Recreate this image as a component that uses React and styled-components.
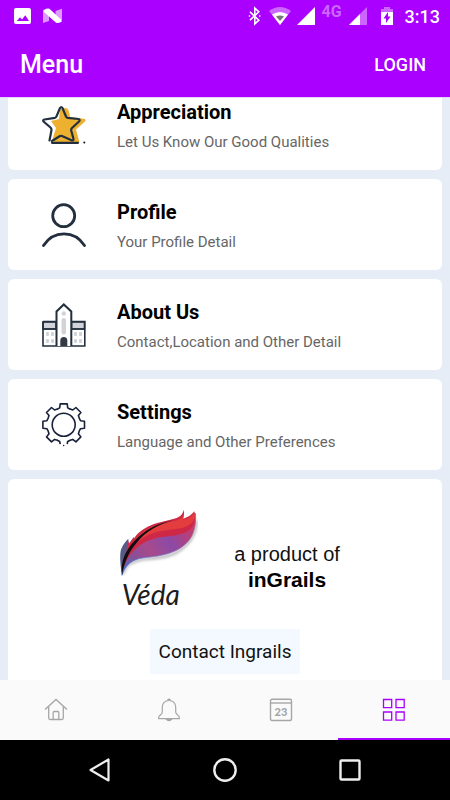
import React, { useLayoutEffect, useRef, useState } from "react";
import styled, { createGlobalStyle } from "styled-components";

const PURPLE = "#aa00ff";
const INK = "#232f3e";

const menuItems = [
  { title: "Appreciation", detail: "Let Us Know Our Good Qualities", Icon: StarIcon },
  { title: "Profile", detail: "Your Profile Detail", Icon: ProfileIcon },
  { title: "About Us", detail: "Contact,Location and Other Detail", Icon: SchoolIcon },
  { title: "Settings", detail: "Language and Other Preferences", Icon: GearIcon },
];

const tabs = [
  { name: "Home", Icon: HomeIcon },
  { name: "Notifications", Icon: BellIcon },
  { name: "Calendar", Icon: CalendarIcon },
  { name: "Menu", Icon: GridIcon },
];

function App() {
  const [active, setActive] = useState("Menu");
  const listRef = useRef(null);

  // the menu opens at its last entries
  useLayoutEffect(() => {
    listRef.current.scrollTop = listRef.current.scrollHeight;
  }, []);

  return (
    <Screen>
      <GlobalStyle />
      <StatusBar>
        <StatusGroup $gap={12}>
          <PictureIcon />
          <NougatIcon />
        </StatusGroup>
        <StatusGroup $gap={6}>
          <BluetoothIcon />
          <WifiIcon />
          <SignalIcon />
          <Network>4G</Network>
          <SignalIcon weak />
          <BatteryIcon />
          <Clock>3:13</Clock>
        </StatusGroup>
      </StatusBar>
      <Header>
        <HeaderTitle>Menu</HeaderTitle>
        <LoginButton type="button">LOGIN</LoginButton>
      </Header>
      <Content ref={listRef}>
        {menuItems.map(({ title, detail, Icon }) => (
          <MenuCard key={title} type="button">
            <Icon />
            <CardText>
              <CardTitle>{title}</CardTitle>
              <CardDetail>{detail}</CardDetail>
            </CardText>
          </MenuCard>
        ))}
        <ProductCard>
          <Brand>
            <VedaLogo />
            <BrandText>
              a product of
              <BrandName>inGrails</BrandName>
            </BrandText>
          </Brand>
          <ContactButton type="button">Contact Ingrails</ContactButton>
        </ProductCard>
      </Content>
      <TabBar>
        {tabs.map(({ name, Icon }) => (
          <Tab
            key={name}
            type="button"
            aria-label={name}
            $active={active === name}
            onClick={() => setActive(name)}
          >
            <Icon />
          </Tab>
        ))}
      </TabBar>
      <SystemBar>
        <SystemButton type="button" aria-label="Back">
          <svg width="24" height="26" viewBox="0 0 24 26" fill="none" stroke="#eee" strokeWidth="2.2" strokeLinejoin="round">
            <path d="M2.5 13 20.5 2.5v21z" />
          </svg>
        </SystemButton>
        <SystemButton type="button" aria-label="Home">
          <svg width="24" height="24" viewBox="0 0 24 24" fill="none" stroke="#eee" strokeWidth="2.4">
            <circle cx="12" cy="12" r="10.7" />
          </svg>
        </SystemButton>
        <SystemButton type="button" aria-label="Recent apps">
          <svg width="22" height="22" viewBox="0 0 22 22" fill="none" stroke="#eee" strokeWidth="2.4">
            <rect x="1.5" y="1.5" width="19" height="19" rx="1" />
          </svg>
        </SystemButton>
      </SystemBar>
    </Screen>
  );
}

/* status bar icons */

function PictureIcon() {
  return (
    <svg width="17" height="16" viewBox="0 0 17 16">
      <rect width="17" height="16" rx="2" fill="#fff" />
      <path d="M2.8 13 6 9.2l2 2.3 3.3-4.3 3.7 5.8z" fill={PURPLE} />
    </svg>
  );
}

function NougatIcon() {
  return (
    <svg width="19" height="16" viewBox="0 0 19 16">
      <path d="M0 1.5V15l6-2V5zM19 .8v13.5L12.500 11V3z" fill="#fff" opacity=".6" />
      <path d="M1 2Q4 0 6.500 .8L18 11.500v2.500q-2.500 1.500-5 .8L1 4z" fill="#fff" />
    </svg>
  );
}

function BluetoothIcon() {
  return (
    <svg width="16" height="20" viewBox="0 0 16 20" fill="none" stroke="#fff" strokeWidth="1.6">
      <path d="M3 5.8 11.800 14.200 7.800 18V2L11.800 5.800 3 14.200" />
      <path d="M1.800 10h1.400M12 10h1.400" />
    </svg>
  );
}

function WifiIcon() {
  return (
    <svg width="22" height="18" viewBox="0 0 22 18">
      <path d="M0 4Q11-4 22 4L11 18z" fill="#cc66ff" />
      <path d="M3 7.500q8-5 16 0L11 18z" fill="#fff" />
      <path d="M7 9.500q4-2 8 0L11 14z" fill="#777" />
    </svg>
  );
}

function SignalIcon({ weak }) {
  return (
    <svg width={weak ? 20 : 19} height="18" viewBox={weak ? "0 0 20 18" : "0 0 19 18"}>
      <path d="M0 18 18 0v18z" fill={weak ? "#cc66ff" : "#fff"} />
      {weak && <path d="M0 18 11 7v11z" fill="#fff" />}
    </svg>
  );
}

function BatteryIcon() {
  return (
    <svg width="24" height="18" viewBox="0 0 24 18">
      <path d="M6 2h3V0h6v2h3v4H6z" fill="#cc66ff" />
      <path d="M6 5h12v13H6z" fill="#fff" />
      <path d="M13 5v4.500h2.500L11 16v-4.500H8.500z" fill={PURPLE} />
    </svg>
  );
}

/* menu icons */

function StarIcon() {
  return (
    <CardIcon viewBox="0 0 44 44">
      <path
        d="M19 6 23 5q4-1 5 9l12 1.500q5 .5 3 3l-9 8 3.500 13H13l-3-3 2-11-6-9 9-2z"
        fill="#edb02f"
      />
      <path d="M18 7 14 15 3 17l7 8-2 12 2 1 4-13-5-7 8-2z" fill="#fff" />
      <path
        d="M7.500 37.500 9.500 27q0-1.500-1-2.500L1.500 18.500q-1-1.500 1-2L13 14.800q1-.3 1.500-1.500L18 5q1.300-2 2.500 0L24 13.500q.5 1 1.500 1.300L36.500 16q2 .8.5 2.500L30 25q-1 1-.8 2.500L31.500 36q0 2-2 1.300L20 33q-1-.3-2 0l-8 5"
        fill="none"
        stroke={INK}
        strokeWidth="2.2"
        strokeLinecap="round"
        strokeLinejoin="round"
      />
      <path d="M10 39.800h26" stroke={INK} strokeWidth="2.2" strokeLinecap="round" />
      <circle cx="42.3" cy="39.5" r="1" fill="#111" />
    </CardIcon>
  );
}

function ProfileIcon() {
  return (
    <CardIcon viewBox="0 0 44 44" fill="none" stroke={INK} strokeWidth="2.8" strokeLinecap="round">
      <circle cx="21.7" cy="12.7" r="11" />
      <path d="M1.500 42.500c10-15.500 31-15.500 41 0" />
    </CardIcon>
  );
}

function SchoolIcon() {
  return (
    <CardIcon viewBox="0 0 44 44" fill="none" stroke={INK} strokeWidth="1.6">
      <path d="M1 19h13v7H1zM29.500 19h13v7h-13z" fill="#d0d4da" />
      <path d="M1 18.500V43h41.800V18.500H30M1 18.500h13M1 26h13M30 26h13" />
      <path d="M14.500 43V8.500l7.300-7 7.500 7V43" fill="#fff" strokeWidth="2" />
      <g fill="#d0d4da" stroke="none">
        <circle cx="21.8" cy="10.5" r="2.2" />
        <rect x="19.5" y="15" width="4.500" height="16.500" rx="2" />
        <rect x="4" y="29" width="3" height="4" rx="1" />
        <rect x="9" y="29" width="3" height="4" rx="1" />
        <rect x="4" y="36" width="3" height="4" rx="1" />
        <rect x="9" y="36" width="3" height="4" rx="1" />
        <rect x="32" y="29" width="3" height="4" rx="1" />
        <rect x="37" y="29" width="3" height="4" rx="1" />
        <rect x="32" y="36" width="3" height="4" rx="1" />
        <rect x="37" y="36" width="3" height="4" rx="1" />
      </g>
      <path d="M18.300 43v-5.500a3.500 3.500 0 0 1 7 0V43z" fill="#333a45" stroke="none" />
    </CardIcon>
  );
}

// seven teeth, the bottom one stays open
function gearPath() {
  const tooth = [
    [-6.5, -15.5],
    [-4, -16.8],
    [-3.5, -20.8],
    [3.5, -20.8],
    [4, -16.8],
    [6.5, -15.5],
  ];
  const points = [];
  for (let k = -3; k <= 3; k++) {
    const a = (k * Math.PI) / 4;
    tooth.forEach(([x, y]) => {
      const px = x * Math.cos(a) - y * Math.sin(a);
      const py = x * Math.sin(a) + y * Math.cos(a);
      points.push(`${px.toFixed(1)} ${py.toFixed(1)}`);
    });
  }
  return `M-3.5 19.5 -4 16.800 -6.500 15.500L${points.join("L")}L6.500 15.500 4 16.800 3.500 19.500`;
}

function GearIcon() {
  return (
    <CardIcon viewBox="0 0 44 44" fill="none" stroke="#18213a" strokeWidth="1.6" strokeLinejoin="round">
      <g transform="translate(21.7 21.7)">
        <path d={gearPath()} />
        <circle r="11.5" />
        <circle cy="20.8" r=".7" fill="#111" stroke="none" />
      </g>
    </CardIcon>
  );
}

/* tab icons */

function HomeIcon() {
  return (
    <svg width="24" height="24" viewBox="0 0 24 24" fill="none" stroke="currentColor" strokeWidth="1.3">
      <path d="M1 11.500 12 1.500l11 10" />
      <path d="M4.700 8.500V20q0 1.500 1.500 1.500h11.600q1.500 0 1.500-1.500V8.500" />
      <path d="M9.200 21.500v-7q0-1 1-1h3.600q1 0 1 1v7" />
    </svg>
  );
}

function BellIcon() {
  return (
    <svg width="24" height="24" viewBox="0 0 24 24" fill="none" stroke="currentColor" strokeWidth="1.2">
      <path d="M12 2.500c-4 0-6.700 3-6.700 6.500v5c0 3-3.600 3-3.600 5.500v1.200h20.600v-1.200c0-2.500-3.600-2.500-3.600-5.500V9c0-3.500-2.700-6.500-6.700-6.500z" />
      <path d="M10.500 2q1.500-1.500 3 0M9.800 21.500q2.200 2 4.400 0z" fill="currentColor" />
    </svg>
  );
}

function CalendarIcon() {
  return (
    <svg width="24" height="24" viewBox="0 0 24 24" fill="none" stroke="currentColor" strokeWidth="1.4">
      <rect x="1.5" y="1.2" width="21" height="21.3" rx="1.5" />
      <path d="M1.500 5h21" />
      <CalendarDay x="12" y="18">23</CalendarDay>
    </svg>
  );
}

function GridIcon() {
  return (
    <svg width="24" height="24" viewBox="0 0 24 24" fill="none" stroke="currentColor" strokeWidth="1.3">
      <path d="M1.500 1.500h8.200v8.200H1.500zM14 1.500h8.200v8.200H14zM1.500 14h8.200v8.200H1.500zM14 14h8.200v8.200H14z" />
    </svg>
  );
}

function VedaLogo() {
  return (
    <svg width="80" height="103" viewBox="55 35 240 309" role="img" aria-label="Veda">
      <defs>
        <linearGradient id="lower" gradientUnits="userSpaceOnUse" x1="66" y1="230" x2="288" y2="90">
          <stop offset="0" stopColor="#4a6fc4" />
          <stop offset=".22" stopColor="#8a4f96" />
          <stop offset=".4" stopColor="#a84a8c" />
          <stop offset=".65" stopColor="#8b4aa6" />
          <stop offset="1" stopColor="#d03a62" />
        </linearGradient>
        <linearGradient id="edge" gradientUnits="userSpaceOnUse" x1="66" y1="0" x2="288" y2="0">
          <stop offset="0" stopColor="#3f6fd0" />
          <stop offset=".4" stopColor="#6fa0e0" />
          <stop offset="1" stopColor="#a0527f" />
        </linearGradient>
        <filter id="shade" x="-20%" y="-20%" width="140%" height="140%">
          <feGaussianBlur stdDeviation="4" />
        </filter>
      </defs>
      <path
        d="M70 236C78 206 100 196 140 191c50-4 84-10 108-32 26-20 42-48 42-84"
        fill="none"
        stroke="#8c8c98"
        strokeWidth="5"
        filter="url(#shade)"
      />
      {/* blue back of the vane with its two notches */}
      <path d="M67 238C60 200 60 168 66 158c5-12 12-20 20-28l1 16 15-20 2 14-20 50z" fill="#565c86" />
      <path d="M80 165l6-28 3 8 13-20 1 12 10-10-8 24z" fill="#d6304e" />
      <path
        d="M67 240C68 200 88 165 125 138c40-22 110-14 162-84 3 24-2 48-9 64-10 22-30 38-50 48-30 14-62 18-98 22-34 5-54 22-63 52z"
        fill="url(#lower)"
        stroke="url(#edge)"
        strokeWidth="2"
      />
      <path
        d="M68 226C72 186 84 152 110 120c14-16 36-28 60-36 24-8 50-10 68-20 8-4 12-12 14-21 2 10 1 18-1 27 14-4 26-12 33-22 5 14 2 30-5 44-16 26-50 28-84 32-50 4-102 28-127 102z"
        fill="#cf2746"
      />
      <path
        d="M84 180c8-24 16-42 34-60 20-18 40-28 64-34 30-8 52-8 68-22v10c16-4 28-12 35-22 2 10 0 18-4 24-14 22-44 24-76 28-50 6-92 22-121 76z"
        fill="#e33d3e"
      />
      <path
        d="M67 240C62 198 76 168 104 137c28-30 66-52 116-62-46 14-80 32-107 65-24 28-38 56-46 100z"
        fill="#120b10"
      />
      <LogoText x="66" y="329">Véda</LogoText>
    </svg>
  );
}

const GlobalStyle = createGlobalStyle`
  * {
    box-sizing: border-box;
  }
  body {
    margin: 0;
    font-family: Roboto, "Liberation Sans", sans-serif;
    background: #e6edf7;
  }
  button {
    border: 0;
    padding: 0;
    background: none;
    font-family: inherit;
    cursor: pointer;
  }
  svg {
    display: block;
    flex-shrink: 0;
  }
`;

const Screen = styled.div`
  height: 100vh;
  display: flex;
  flex-direction: column;
`;

const StatusBar = styled.div`
  height: 32px;
  flex-shrink: 0;
  padding: 0 10px 0 14px;
  display: flex;
  align-items: center;
  justify-content: space-between;
  color: white;
  background-color: ${PURPLE};
`;

const StatusGroup = styled.div`
  display: flex;
  align-items: center;
  gap: ${(props) => props.$gap}px;
`;

const Network = styled.span`
  width: 21px;
  height: 24px;
  font-size: 16px;
  line-height: 16px;
  font-weight: bold;
  color: #cc66ff;
`;

const Clock = styled.span`
  font-size: 18px;
  font-weight: 500;
`;

const Header = styled.header`
  height: 66px;
  flex-shrink: 0;
  padding: 0 24px 0 20px;
  display: flex;
  align-items: center;
  justify-content: space-between;
  color: white;
  background-color: ${PURPLE};
  border-bottom: 1px solid #e8d0f8;
`;

const HeaderTitle = styled.h1`
  margin: 0;
  font-size: 25px;
  font-weight: 500;
`;

const LoginButton = styled.button`
  font-size: 18px;
  font-weight: 500;
  color: white;
`;

const Content = styled.main`
  flex: 1;
  min-height: 0;
  padding: 9px 8px 0;
  display: flex;
  flex-direction: column;
  gap: 9px;
  overflow-y: auto;
  scrollbar-width: none;
`;

const MenuCard = styled.button`
  height: 91px;
  flex-shrink: 0;
  padding: 0 34px;
  display: flex;
  align-items: center;
  gap: 31px;
  text-align: left;
  background-color: white;
  border-radius: 6px;
`;

const CardIcon = styled.svg`
  width: 44px;
  height: 44px;
`;

const CardText = styled.span`
  padding-top: 5px;
  display: flex;
  flex-direction: column;
  gap: 6px;
`;

const CardTitle = styled.span`
  font-size: 20px;
  line-height: 24px;
  font-weight: bold;
  color: black;
`;

const CardDetail = styled.span`
  font-size: 15px;
  line-height: 24px;
  color: #666;
`;

const ProductCard = styled.section`
  flex-shrink: 0;
  padding: 28px 0 6px;
  display: flex;
  flex-direction: column;
  align-items: center;
  gap: 19px;
  background-color: white;
  border-radius: 6px 6px 0 0;
`;

const Brand = styled.div`
  padding-left: 8px;
  display: flex;
  align-items: center;
  gap: 36px;
`;

const BrandText = styled.p`
  margin: 0;
  padding-top: 16px;
  font-family: "Liberation Sans", sans-serif;
  font-size: 20px;
  line-height: 25px;
  text-align: center;
  color: #111;
`;

const BrandName = styled.strong`
  display: block;
  font-size: 21px;
  color: black;
`;

const ContactButton = styled.button`
  height: 45px;
  padding: 0 9px;
  font-size: 19px;
  color: #111;
  background-color: #f4f8ff;
`;

const LogoText = styled.text`
  font-family: Lato, sans-serif;
  font-size: 84px;
  font-style: italic;
  fill: #1c1c1c;
`;

const TabBar = styled.nav`
  height: 60px;
  flex-shrink: 0;
  display: grid;
  grid-template-columns: repeat(4, 1fr);
  background-color: #fafafa;
`;

const Tab = styled.button`
  padding-top: 2px;
  display: flex;
  align-items: center;
  justify-content: center;
  color: ${(props) => (props.$active ? PURPLE : "#a6a6a6")};
  border-bottom: 2px solid ${(props) => (props.$active ? PURPLE : "transparent")};
`;

const CalendarDay = styled.text`
  font-family: Lato, sans-serif;
  font-size: 11px;
  font-weight: 900;
  text-anchor: middle;
  fill: currentColor;
  stroke: none;
`;

const SystemBar = styled.div`
  height: 60px;
  flex-shrink: 0;
  padding: 0 37px;
  display: grid;
  grid-template-columns: repeat(3, 1fr);
  background-color: black;
`;

const SystemButton = styled.button`
  display: flex;
  align-items: center;
  justify-content: center;
`;

export default App;
